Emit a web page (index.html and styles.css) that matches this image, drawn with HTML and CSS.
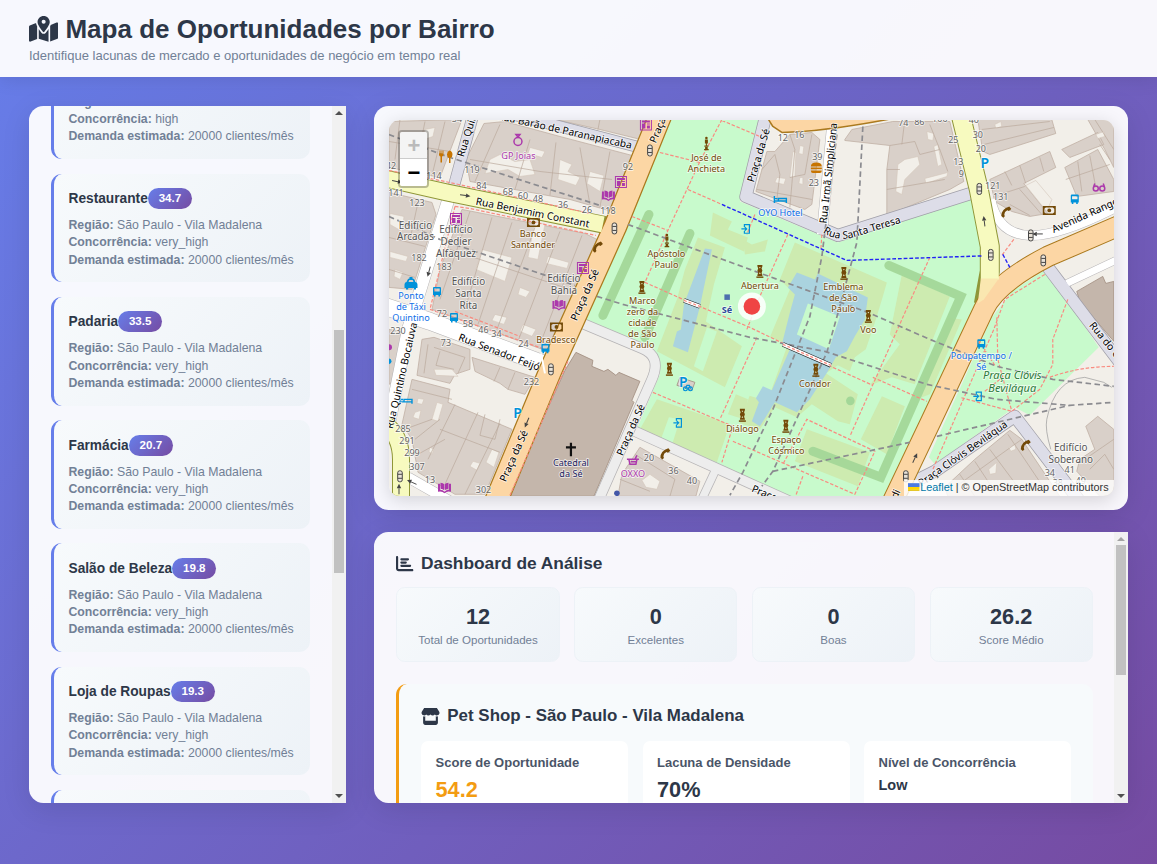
FILE: index.html
```html
<!DOCTYPE html>
<html lang="pt-BR">
<head>
<meta charset="utf-8">
<title>Mapa de Oportunidades por Bairro</title>
<link rel="stylesheet" href="styles.css">
</head>
<body>
<header class="header">
  <h1><svg class="ico ico-map" viewBox="0 0 576 512"><path d="M408 120c0 54.6-73.1 151.9-105.2 192c-7.7 9.6-22 9.6-29.6 0C241.1 271.9 168 174.6 168 120C168 53.7 221.7 0 288 0s120 53.7 120 120zm8 80.4c3.5-6.9 6.7-13.8 9.6-20.6c.5-1.2 1-2.5 1.5-3.7l116-46.4C558.9 123.4 576 135 576 152V422.8c0 9.8-6 18.6-15.1 22.3L416 503V200.4zM137.6 138.3c2.4 14.1 7.2 28.3 12.8 41.5c2.9 6.8 6.1 13.7 9.6 20.6V451.8L32.9 502.7C17.1 509 0 497.4 0 480.4V209.6c0-9.8 6-18.6 15.1-22.3l122.6-49zM327.8 332c13.9-17.4 35.7-45.7 56.2-77V504.3L192 449.4V255c20.5 31.3 42.3 59.6 56.2 77c20.5 25.6 59.1 25.6 79.6 0zM288 152a40 40 0 1 0 0-80 40 40 0 1 0 0 80z"/></svg><span>Mapa de Oportunidades por Bairro</span></h1>
  <p>Identifique lacunas de mercado e oportunidades de negócio em tempo real</p>
</header>
<main class="main">
  <aside class="panel sidebar">
    <div class="scroll">
      <div class="list">
        <article class="opp"><div class="opp-head opp-blank"></div><p><b>Região:</b> São Paulo - Vila Madalena</p><p><b>Concorrência:</b> high</p><p><b>Demanda estimada:</b> 20000 clientes/mês</p></article>
        <article class="opp"><div class="opp-head"><h4>Restaurante</h4><span class="badge">34.7</span></div><p><b>Região:</b> São Paulo - Vila Madalena</p><p><b>Concorrência:</b> very_high</p><p><b>Demanda estimada:</b> 20000 clientes/mês</p></article>
        <article class="opp"><div class="opp-head"><h4>Padaria</h4><span class="badge">33.5</span></div><p><b>Região:</b> São Paulo - Vila Madalena</p><p><b>Concorrência:</b> very_high</p><p><b>Demanda estimada:</b> 20000 clientes/mês</p></article>
        <article class="opp"><div class="opp-head"><h4>Farmácia</h4><span class="badge">20.7</span></div><p><b>Região:</b> São Paulo - Vila Madalena</p><p><b>Concorrência:</b> very_high</p><p><b>Demanda estimada:</b> 20000 clientes/mês</p></article>
        <article class="opp"><div class="opp-head"><h4>Salão de Beleza</h4><span class="badge">19.8</span></div><p><b>Região:</b> São Paulo - Vila Madalena</p><p><b>Concorrência:</b> very_high</p><p><b>Demanda estimada:</b> 20000 clientes/mês</p></article>
        <article class="opp"><div class="opp-head"><h4>Loja de Roupas</h4><span class="badge">19.3</span></div><p><b>Região:</b> São Paulo - Vila Madalena</p><p><b>Concorrência:</b> very_high</p><p><b>Demanda estimada:</b> 20000 clientes/mês</p></article>
        <article class="opp"></article>
      </div>
    </div>
    <div class="bar"><i class="up"></i><div class="rail"><div class="thumb thumb-side"></div></div><i class="down"></i></div>
  </aside>

  <div class="right">
    <section class="panel mapcard">
      <div class="map">
<svg class="tiles" viewBox="389 120.5 725 375.5" preserveAspectRatio="none">
<defs>
  <g id="light" fill="#e8e2d8" stroke="#444" stroke-width="1"><rect x="-2.3" y="-5.5" width="4.6" height="11" rx="2"/><path d="M-2 -2h4M-2 2h4" /></g>
  <g id="art" fill="#734a08"><path d="M-2.5 -6.500h5v1.300l-.8 2.200.8 2-.8 2.500.8 2.200v.8h-5v-.8l.8-2.200-.8-2.500.8-2-.8-2.200z"/><path d="M-3.500 5h7v1.500h-7z"/><path d="M-.8 -4.500h1.600l-.8 1.500zM-.8 2.500l.8 -1.800l.8 1.800z" fill="#e4efc8"/></g>
  <g id="statue" fill="#734a08"><circle cy="-5.500" r="1.300"/><path d="M-1.500 -4h3v4h-1v2h-1v-2h-1zM-2 2h4v1.300h-4zM-1.300 3.500h2.600v2h1v1.200h-4.600v-1.200h1z"/></g>
  <g id="news" fill="#ac39ac"><path fill-rule="evenodd" d="M-6 -6h12v12h-12zM-5 -5v10h10v-10z"/><path d="M-4 -4h8v2h-8zM-4 -1h3.500v5h-3.500zM1 -1h3v1h-3zM1 1h3v3h-3z"/></g>
  <g id="book" fill="#ac39ac"><path d="M-6.500 -4l2 0v6q3 0 4.500 2q1.500 -2 4.500 -2v-6h2v8q-4 -1 -6.500 1.500q-2.500 -2.500 -6.500 -1.500zM-4 -5q3 0 3.700 1.500v6q-1.500 -1.500 -3.700 -1.500zM4 -5q-3 0 -3.700 1.500v6q1.500 -1.500 3.700 -1.500z"/></g>
  <g id="bank" fill="#734a08"><path fill-rule="evenodd" d="M-6.500 -4.500h13v9h-13zM-5 -1.800v3.600l1.500 1.200h7l1.500 -1.200v-3.600l-1.500 -1.200h-7z"/><circle r="1.900"/></g>
  <g id="bus" fill="#0092da"><path fill-rule="evenodd" d="M-3 -4.500h6q1 0 1 1v7h-1v1.500h-1.600v-1.500h-2.800v1.500h-1.600v-1.500h-1v-7q0 -1 1 -1zM-2.700 -2.800v3h5.400v-3z"/></g>
  <g id="gate" fill="none" stroke="#0092da" stroke-width="1.200"><path d="M-1.500 -2v-2.300h5v8.600h-5v-2.300M-4.500 0h5M-1.200 -2l2 2l-2 2"/></g>
  <g id="phone"><path d="M-5 4.500q0 -7 8 -9.500l2 2.500l-2.500 2l-1.500 -.8q-3 1.500 -3 4.300l.5 1.700l-1.500 1.600z" fill="#734a08"/></g>
  <g id="bed" fill="none" stroke="#0092da" stroke-width="1.400"><path d="M-6 -3.500v7M-6 1.500h12M6 3.500v-4.500h-8v2M-5.500 -.8h2.500"/></g>
  <g id="arrow" stroke="#444" fill="#444"><path d="M-5 0h6" /><path d="M1 -2.200l4.500 2.200l-4.500 2.200z" stroke="none"/></g>
  <path id="teresa" d="M823 233Q838 243 856 237L906 222"/>
</defs>
<rect x="389" y="120" width="726" height="377" fill="#f2efe9"/>

<!-- parks -->
<g fill="#c8facc">
  <path d="M671 120H762L740 202L838 243L972 197L982 257L978 300L888 497H780L636 432L660 375L655 355L585 320Z"/>
  <path d="M1046 270L1099 348L1030 416L1015 408L935 465L929 458L992 318L1012 292Z"/>
</g>
<g fill="#cdebb0">
  <path d="M713 213L732 222L728 230L748 238L744 252L710 236Z"/>
  <path d="M698 238L725 248L714 285L706 322L742 347L725 388L657 352L677 300L685 270Z"/>
  <path d="M657 400L730 425L717 463L640 430Z"/>
  <path d="M795 243L887 283L883 297L876 320L866 350L855 358L850 372L838 366L826 374L858 395L850 425L838 422L812 405L797 418L775 408L760 430L740 424L752 390L770 395L788 345L770 338L790 290L780 280Z"/>
  <path d="M882 397L905 407L887 455L861 440Z"/>
  <path d="M807 430L870 453L858 487L795 462Z"/>
  <path d="M902 275L950 297L915 385L892 378L870 386L900 345L890 335Z"/>
  <path d="M736 395L748 400L744 420L728 415Z"/>
  <path d="M917 400L925 370L948 318L962 320L930 395Z"/>
  <path d="M743 240L752 245L768 240L765 252L745 255Z"/>
</g>
<g fill="#c8facc">
  <path d="M707 328L717 332L703 372L694 367Z"/><path d="M669 418L680 420L672 446L661 440Z"/><path d="M752 352L778 360L762 400L744 395Z"/>
</g>
<path fill="#aad3df" d="M797 273L815 280L818 274L868 298L865 320L855 337L847 352L836 358L828 372L810 400L797 413L775 403L760 427L752 422L759 403L756 399L763 387L772 391L790 350L782 345L790 313L795 295L788 288Z"/>
<path fill="#c8facc" d="M808 304L840 317L829 350L797 335Z"/>
<path fill="#aad3df" d="M705 249L712 250L700 307L688 353L673 347L677 332L681 330L684 305Z"/>
<g fill="none" stroke="#a3d798" stroke-width="9" stroke-linejoin="miter" opacity=".95">
  <path stroke-linecap="round" d="M649 215L603 316M690 234L645 338M889 266L961 297L881 478L813 452"/>
</g>
<circle cx="850.500" cy="401.500" r="4.300" fill="#a3d798"/>

<!-- buildings -->
<g fill="#d9d0c9" stroke="#c0b0a5" stroke-width=".8">
  <path d="M389 122L462 120L440 178L389 168Z"/>
  <path d="M484 124L505 122L560 137L636 157L612 212L570 200L470 182L466 160Z"/>
  <path d="M530 120H646L641 140L600 130L560 121Z"/>
  <path d="M389 193L432 203L436 215L412 290L389 288Z"/>
  <path d="M462 210L585 234L597 240L548 352L432 310L440 270Z"/>
  <path d="M422 340L434 338L470 350L470 370L455 375L450 384L417 376Z"/>
  <path d="M472 358L535 378L525 395L508 390L500 384L475 372Z"/>
  <path d="M412 380L450 390L448 403L512 430L485 495H455L418 473L412 440L402 425Z"/>
  <path d="M389 330L402 332L396 380L389 385Z"/>
  <path d="M775 152L790 135L812 133L820 140L812 205L805 210L756 192L767 152Z"/>
  <path d="M845 140L852 130L893 122H950L964 182L950 190L887 216L887 170L890 146L845 141Z"/>
  <path d="M978 120H1052L1056 134L990 155L983 152Z"/>
  <path d="M1062 150L1098 133L1104 145L1070 158ZM1088 120H1114V168L1105 150ZM1065 168L1098 150L1114 180V192L1077 197Z"/>
  <path d="M990 180L1050 152L1056 168L1024 184L1048 214L1030 217L1012 212L995 202Z"/>
  <path d="M945 488L975 460L1010 431L1022 440L1060 497H948Z"/>
  <path d="M1086 427L1098 417L1114 430V497H1100L1077 472L1080 460L1095 450Z"/>
  <path d="M622 475L640 448L700 482L696 497H618Z"/>
</g>
<g fill="#f2efe9" stroke="#d3c6bb" stroke-width=".6">
  <path d="M490 160L500 155L515 162L530 160L535 175L520 177L508 170L485 174Z"/>
  <path d="M530 148L545 152L542 158L528 154ZM560 160L572 165L568 172L580 178L576 186L558 180ZM590 172L604 176L600 192L587 184Z"/>
  <path d="M405 150L410 152L408 165L401 163ZM418 152L428 155L426 162L416 158ZM425 130L435 128L433 137L424 140Z"/>
  <path d="M390 214L404 217L402 232L390 225ZM395 270L403 273L400 280L394 277ZM390 252L408 257L406 262L390 258Z"/>
  <path d="M482 250L512 258L505 282L476 270ZM535 222L545 225L538 260L528 258ZM548 257L569 263L567 269L546 264ZM520 288L530 292L526 298L518 295Z"/>
  <path d="M495 315L507 318L504 325L492 321ZM523 325L536 330L532 337L520 332ZM460 325L470 328L467 336L458 333Z"/>
  <path d="M434 370L452 370L458 377L436 376ZM418 399L424 400L422 405L417 404ZM415 413L421 411L419 420L413 418ZM437 403L443 405L438 422L432 420ZM492 450L499 453L494 468L486 463ZM473 462L480 464L477 471L470 467ZM430 448L434 450L432 455L429 452Z"/>
  <path d="M800 146L804 147L803 155L799 154ZM793 152L796 153L795 178L790 178ZM777 178L786 179L784 185L775 183ZM800 178L803 178L803 185L799 184Z"/>
  <path d="M898 165L905 160L918 157L920 165L905 180L902 195L896 192ZM927 132L934 134L933 141L928 140ZM934 147L938 145L942 165L938 167ZM925 179L948 173L947 177L926 184ZM995 125L1001 122L1002 127L996 129Z"/>
  <path d="M1096 135L1104 132L1105 137L1098 139ZM1026 186L1036 181L1052 200L1047 212ZM989 470L997 463L996 474L990 475ZM1009 448L1015 445L1016 450L1011 452ZM642 481L650 475L660 482L657 490L646 488Z"/>
</g>
<g fill="none" stroke="#baa99c" stroke-width=".7">
  <path d="M400 120L395 160M425 122L415 172M445 122L432 176M389 142L450 152M500 125L475 182M530 140L515 190M556 143L550 196M580 148L590 205M610 152L600 208M470 160L540 172L612 180M600 120L598 130"/>
  <path d="M389 238L425 247M389 270L415 278M418 203L410 240M470 212L440 300M492 218L465 310M512 223L478 325M535 228L497 330M560 232L518 342M582 236L540 345M450 250L570 290"/>
  <path d="M428 345L424 374M434 348L465 358M465 358L458 374M440 352L436 366L454 370M500 368L494 382M515 373L508 390M412 390L452 400M455 405L428 460M478 413L445 485M500 424L465 495M440 430L500 453M410 428L432 420M415 440L440 420M418 455L445 440M485 415L480 436L495 440L500 420"/>
  <path d="M762 170L775 155L780 175L777 200M790 135L795 150L790 208M812 135L805 175L790 178M757 190L812 200M890 146L915 142L920 155L940 150L948 172M905 120L902 145M930 125L940 150M887 170L900 170M887 190L945 180M982 130L1050 122M984 145L1054 128M1020 166L1026 184M1040 158L1044 172M1005 172L1012 186M1000 195L1025 187M1020 190L1042 215M1010 205L1030 216"/>
  <path d="M1078 162L1082 192M1090 156L1096 188M1066 180L1110 165M1095 120L1114 150M1100 145L1110 160"/>
  <path d="M975 462L998 497M990 450L1025 497M1008 435L1045 490M960 475L975 497M955 488L1022 440M1085 460L1114 440M1090 470L1105 455L1114 470M635 455L675 480L670 497M620 480L650 492"/>
  <path d="M1051 450Q1045 430 1047 420Q1055 380 1085 378L1104 383L1112 388" stroke="#999"/>
</g>
<g fill="#c4b6ab" stroke="#a08c7e" stroke-width=".8">
  <path d="M576 353L593 361L592 367L604 372L608 370L616 376L619 373L640 382L632 401L634 403L594 497H508L565 371Z"/>
  <path d="M1077 292L1103 277L1106 284L1114 282V342L1080 302Z"/>
  <path d="M680 378L695 383L692 391L677 386Z" fill="#d9d0c9"/>
</g>

<!-- street casings -->
<g fill="none" stroke="#b5b3b5" stroke-linejoin="round">
  <path stroke-width="11" d="M580 323L642 349Q662 357 652 380L599 500M635 432L752 485L790 502"/><path stroke-width="9" d="M716 470L702 500"/>
  <path stroke-width="13" d="M449 198L422 285L408 330L388 430"/><path stroke-width="18" d="M385 307L430 322L545 365"/>
  <path stroke-width="11" d="M408 478L450 502M833 118L822 235"/><path stroke-width="10" d="M991 200Q998 235 1030 236Q1060 237 1120 206"/><path stroke-width="8" d="M1067 284L1120 259"/>
</g>
<g fill="none" stroke="#a09fa8" stroke-linejoin="round">
  <path stroke-width="13" d="M766 116L746 197L838 236L974 193"/><path stroke-width="12" d="M473 116L453 190M490 109L560 127L640 148"/>
  <path stroke-width="13" d="M1046 265L1120 363M903 488L935 472L1015 417L1080 502"/>
</g>
<g fill="none" stroke="#ededed" stroke-linejoin="round">
  <path stroke-width="9.500" d="M580 323L642 349Q662 357 652 380L599 500M635 432L752 485L790 502"/><path stroke-width="7.500" d="M716 470L702 500"/>
</g>
<g fill="none" stroke="#fff" stroke-linejoin="round">
  <path stroke-width="12" d="M449 198L422 285L408 330L388 430"/><path stroke-width="17" d="M385 307L430 322L545 365"/>
  <path stroke-width="10" d="M408 478L450 502M833 118L822 235"/><path stroke-width="9" d="M991 200Q998 235 1030 236Q1060 237 1120 206"/><path stroke-width="7" d="M1067 284L1120 259"/>
</g>
<g fill="none" stroke="#dddde8" stroke-linejoin="round">
  <path stroke-width="11.500" d="M766 116L746 197L838 236L974 193"/><path stroke-width="10.500" d="M473 116L453 190M490 109L560 127L640 148"/>
  <path stroke-width="11.500" d="M1046 265L1120 363M903 488L935 472L1015 417L1080 502"/>
</g>
<g fill="none" stroke="#8f9638" stroke-linejoin="round"><path stroke-width="18" d="M385 179L447 193L612 227M384 424Q401 436 401 460V500"/><path stroke-width="20" d="M961 116L979 190L990 247V272L984 305"/></g>
<g fill="none" stroke="#ab7a1e" stroke-linejoin="round"><path stroke-width="24" d="M662 112L615 228L551 370L496 502"/><path stroke-width="21.500" d="M892 504L932 420L984 310Q996 284 1048 257L1120 226"/><path fill="#fcd6a4" stroke-width="1.500" d="M768 119L773 127L782 133Q825 132 893 119Z"/></g>
<g fill="none" stroke="#fcd6a4" stroke-linejoin="round"><path stroke-width="21.500" d="M662 112L615 228L551 370L496 502"/><path stroke-width="19.500" d="M892 504L932 420L984 310Q996 284 1048 257L1120 226"/></g>
<g fill="none" stroke="#f7fabf" stroke-linejoin="round"><path stroke-width="16" d="M385 179L447 193L603 225M384 424Q401 436 401 460V500"/><path stroke-width="18" d="M961 116L979 190L990 247V280"/></g>
<path d="M981 279H999L984 300L978 304Z" fill="#fae7b0"/>
<path d="M541 354L545 374" stroke="#fff" stroke-width="2"/>
<path d="M443 187L455 190L453 202L441 199Z" fill="#f7fabf"/>

<!-- paths -->
<g fill="none" stroke="#f98b80" stroke-width="1.200" stroke-dasharray="3.500 1.800">
  <path d="M722 120L700 162L668 231L645 283L690 303L750 328L833 368L873 386M722 121L760 137M660 153L700 163M688 190L722 205M632 217L668 231"/>
  <path d="M930 258L911 300L850 437M873 378L927 402M788 235L760 297L747 330M757 338L720 420M653 393L733 427L722 463M733 442L855 495L875 452L807 420L783 465M803 477L796 496M755 215L747 235M822 235L821 250"/>
  <path d="M389 171L445 182L590 214M455 207L470 209L596 236M455 207L447 240L430 310L465 322L545 350M568 362L510 496M1014 240L1002 256M1045 275L1005 300L994 330L933 470M997 318L998 360L1012 412M995 366L978 340M1068 300L1053 340V365L1040 390L1012 412L960 398M1050 378Q1080 367 1114 367M455 312L520 337M985 392L1000 380"/>
</g>
<g fill="none" stroke="#8b8b90" stroke-width="1.700" stroke-dasharray="5.500 3.500">
  <path d="M628 225L750 270L868 313L930 340L997 367L1053 380L1114 387M597 297L623 305L750 338L825 352L927 385L997 400L1070 406L1114 403M773 472L910 443M937 437L1070 406"/>
  <path d="M837 135L822 257L810 317L773 410L743 473L730 496M863 127L857 243L840 307L827 353L773 472L762 487M389 135L447 157L600 206M389 217L440 240L575 286"/>
</g>
<path fill="none" stroke="#2222f5" stroke-width="1.400" stroke-dasharray="3.800 1.900" d="M722 205L740 213L847 261L982 256.500M1003 255L1010 268"/>
<path d="M684 301L700 307M783 345L831 366" stroke="#222" stroke-width="4.500" fill="none"/><path d="M684 301L700 307M783 345L831 366" stroke="#fff" stroke-width="3.300" fill="none"/><path d="M684 301L700 307M783 345L831 366" stroke="#f98b80" stroke-width="1.200" stroke-dasharray="3 2"/>

<!-- points of interest -->
<use href="#light" x="650" y="151"/><use href="#light" x="614.500" y="229"/><use href="#light" x="551" y="370"/><use href="#light" x="400" y="477"/><use href="#light" x="979.500" y="189.500"/><use href="#light" x="991" y="255.500"/><use href="#light" x="1031" y="236"/><use href="#light" x="1043.500" y="261"/><use href="#light" x="906" y="477"/>
<use href="#art" x="642" y="288"/><use href="#art" x="760" y="272"/><use href="#art" x="844" y="274"/><use href="#art" x="868.500" y="317"/><use href="#art" x="816" y="371"/><use href="#art" x="742.500" y="416"/><use href="#art" x="786" y="427"/><use href="#art" x="669.500" y="370"/>
<use href="#statue" x="706.500" y="144"/><use href="#statue" x="667" y="241"/>
<use href="#news" x="646" y="125"/><use href="#news" x="621" y="182.500"/><use href="#news" x="456" y="219.500"/><use href="#news" x="583" y="268.500"/>
<use href="#book" x="608.500" y="196"/><use href="#book" x="559" y="305.500"/><use href="#book" x="444.500" y="488.500"/>
<use href="#bank" x="533.500" y="223"/><use href="#bank" x="556.500" y="327.500"/><use href="#bank" x="1049.500" y="211"/>
<use href="#bus" x="437" y="292"/><use href="#bus" x="454" y="318"/><use href="#bus" x="545.500" y="349"/><use href="#bus" x="1075" y="199.500"/><use href="#bus" x="981.500" y="344.500"/>
<use href="#gate" x="746" y="229.500"/><use href="#gate" x="678" y="423.500"/><use href="#gate" x="978" y="397"/>
<use href="#phone" x="598" y="247"/><use href="#phone" x="1006.500" y="212"/><use href="#phone" x="665.500" y="454"/><use href="#phone" x="1026" y="445.500"/>
<use href="#bed" x="780.500" y="200"/><use href="#bed" x="406" y="401"/>
<use href="#arrow" transform="translate(465 196) rotate(8)"/><use href="#arrow" transform="translate(397 182) rotate(12)"/><use href="#arrow" transform="translate(429 272) rotate(105)"/><use href="#arrow" transform="translate(527 423) rotate(113)"/><use href="#arrow" transform="translate(984.500 222) rotate(-97)"/><use href="#arrow" transform="translate(1038 234.500) rotate(180)"/><use href="#arrow" transform="translate(915 459) rotate(-65)"/><use href="#arrow" transform="translate(412 483) rotate(205)"/><use href="#arrow" transform="translate(399 490) rotate(-90)"/>
<path fill-rule="evenodd" d="M404.500 285q0 -2 2 -2.300l1.200 -2.700q.5 -1 1.800 -1v-1.500h3v1.500q1.300 0 1.800 1l1.200 2.700q2 .3 2 2.300v3.500h-1.500v1.500h-2.200v-1.500h-5.600v1.500h-2.200v-1.500h-1.500zM408.500 282.500h5l-.8 -1.800h-3.400z" fill="#0092da"/>
<path d="M439 151v4q0 2 1.500 2v6h1.500v-6q1.500 0 1.500 -2v-4h-1v3h-1v-3h-1v3h-1v-3zM449.500 151q3 1 3 4t-2 3.500v5h-1.500v-5q-2 -.5 -2 -3.500t2.500 -4z" fill="#c77400"/>
<path d="M811 167q0 -4 5.500 -4t5.500 4zM811 168h11v1.800h-11zM811 171h11q0 2.500 -2 2.500h-7q-2 0 -2 -2.500z" fill="#c77400"/>
<g fill="none" stroke="#ac39ac" stroke-width="1.500"><circle cx="518" cy="142" r="4"/><path d="M516 135h4l-2 2.500z"/><circle cx="1096" cy="189" r="2.500"/><circle cx="1102.500" cy="189" r="2.500"/><path d="M1094 187l1 -3M1104.500 187l-1 -3"/><path d="M627 460h12M629 460l1 5h6l1 -5M631 462.500h5M635 460l2 -4" /></g>
<path d="M569.900 443.500h2.200v3.500h3.900v2.200h-3.900v7.800h-2.200v-7.800h-3.900v-2.200h3.900z" fill="#111"/>
<rect x="724.500" y="295" width="5.500" height="5.500" fill="#4d6fae"/><circle cx="617" cy="494" r="2.800" fill="#4357a8"/><circle cx="389" cy="348" r="3" fill="#ac39ac"/><circle cx="388.500" cy="362" r="3" fill="#0092da"/>
<g fill="none" stroke="#0092da" stroke-width="1.200"><circle cx="685.500" cy="389.500" r="1.900"/><circle cx="690.500" cy="389.500" r="1.900"/><path d="M685.500 389.500l1.500 -3.500h2.500l1 3.500"/></g>

<!-- labels -->
<g class="num">
  <text x="457" y="123">54</text><text x="472" y="174">119</text><text x="434" y="180">114</text><text x="391" y="170">42</text><text x="481.500" y="190">84</text><text x="508" y="196">68</text><text x="523" y="200">60</text><text x="538" y="203">48</text><text x="563" y="209">36</text><text x="587" y="214">26</text><text x="608" y="215">118</text><text x="628" y="171">92</text><text x="396" y="197">141</text><text x="417" y="207">123</text><text x="419" y="262">182</text><text x="444" y="271">183</text>
  <text x="442" y="318">72</text><text x="468" y="328">58</text><text x="483.500" y="334">46</text><text x="496.500" y="338">34</text><text x="523.500" y="348">24</text><text x="398" y="335">230</text><text x="446" y="347">73</text><text x="531.500" y="386">232</text><text x="403" y="433">285</text><text x="407" y="445">291</text><text x="412" y="457">299</text><text x="417" y="471">307</text><text x="430" y="484">13</text><text x="483.500" y="494">302</text>
  <text x="783" y="142">12</text><text x="799.500" y="139">16</text><text x="817.500" y="161">39</text><text x="814" y="187">23</text><text x="903.500" y="127">74</text><text x="919.500" y="126">86</text><text x="940" y="123">100</text><text x="974" y="124">40</text><text x="978" y="139">30</text><text x="981" y="153">20</text><text x="953.500" y="144">25</text><text x="958.500" y="166">13</text><text x="961.500" y="178">9</text><text x="993" y="190">121</text><text x="1001" y="201">131</text><text x="649" y="462">20</text><text x="673.500" y="475">36</text><text x="692" y="485">40</text><text x="1050" y="477">34</text><text x="1070" y="474">41</text><text x="1058" y="487">38</text><text x="1081" y="485">49</text>
</g>
<g class="bld">
  <text x="415.500" y="230">Edifício</text><text x="415.500" y="241">Arcadas</text><text x="456" y="234">Edifício</text><text x="456" y="246">Dedier</text><text x="456" y="258">Alfaquez</text><text x="468.500" y="286">Edifício</text><text x="468.500" y="298">Santa</text><text x="468.500" y="310">Rita</text><text x="564" y="283">Edifício</text><text x="564" y="295">Bahia</text><text x="1071" y="452">Edifício</text><text x="1071" y="464">Soberano</text>
</g>
<g class="poi brown">
  <text x="533" y="238">Banco</text><text x="533" y="249">Santander</text><text x="556" y="344">Bradesco</text><text x="706.500" y="162">José de</text><text x="706.500" y="173">Anchieta</text><text x="666.500" y="258">Apóstolo</text><text x="666.500" y="269">Paulo</text><text x="760" y="290">Abertura</text><text x="843.500" y="291">Emblema</text><text x="843.500" y="302">de São</text><text x="843.500" y="313">Paulo</text><text x="868.500" y="334">Voo</text><text x="815" y="388">Condor</text><text x="742.500" y="433">Diálogo</text><text x="786.500" y="444">Espaço</text><text x="786.500" y="455">Cósmico</text>
  <text x="642.500" y="305">Marco</text><text x="642.500" y="316">zero da</text><text x="642.500" y="327">cidade</text><text x="642.500" y="338">de São</text><text x="642.500" y="349">Paulo</text>
</g>
<g class="poi purple"><text x="518.500" y="160">GP Joias</text><text x="633" y="478">OXXO</text></g>
<g class="poi blue"><text x="780.500" y="217">OYO Hotel</text><text x="411" y="300">Ponto</text><text x="411" y="311">de Táxi</text><text x="411" y="322">Quintino</text><text x="981.500" y="360">Poupatempo /</text><text x="981.500" y="371">Sé</text></g>
<g class="poi navy"><text x="571" y="467">Catedral</text><text x="571" y="478">da Sé</text><text x="727" y="314" class="strong">Sé</text></g>
<g class="poi leaf"><text x="1012.500" y="380">Praça Clóvis</text><text x="1012.500" y="393">Beviláqua</text></g>
<g class="poi park-p"><text x="985" y="169">P</text><text x="517.500" y="419">P</text><text x="683.500" y="388">P</text></g>
<g class="street">
  <text transform="translate(532 216.500) rotate(11.500)">Rua Benjamim Constant</text>
  <text transform="translate(564 134.500) rotate(12.500)">Rua Barão de Paranapiacaba</text>
  <text transform="translate(470 138) rotate(-73)">Rua Quir</text>
  <text transform="translate(498 356) rotate(21)">Rua Senador Feijó</text>
  <text transform="translate(405 377) rotate(-77)">Rua Quintino Bocaiuva</text>
  <text transform="translate(588 297) rotate(-66)">Praça da Sé</text>
  <text transform="translate(517 458) rotate(-66)">Praça da Sé</text>
  <text transform="translate(634 432) rotate(-66)">Praça da Sé</text>
  <text transform="translate(661 132) rotate(-67)">Praça</text>
  <text transform="translate(762 157) rotate(-73)">Praça da Sé</text>
  <text transform="translate(832 174) rotate(-84)">Rua Irmã Simpliciana</text>
  <text class="from"><textPath href="#teresa">Rua Santa Teresa</textPath></text>
  <text class="from" transform="translate(1054 233.500) rotate(-24)">Avenida Rangel</text>
  <text transform="translate(965 457) rotate(-35)">Praça Clóvis Beviláqua</text>
  <text class="from" transform="translate(1089 326) rotate(51)">Rua do C</text>
  <text transform="translate(770 500) rotate(23)">Praça da</text>
  <text transform="translate(899 496) rotate(-66)">di</text>
</g>
<circle cx="752" cy="307" r="14" fill="#fff" opacity=".85"/><circle cx="752" cy="307" r="8.300" fill="#ef4444"/>
</svg>
        <div class="zoomctl"><span class="off">+</span><span>−</span></div>
        <div class="attrib"><svg viewBox="0 0 12 8"><path fill="#4C7BE1" d="M0 0h12v4H0z"/><path fill="#FFD500" d="M0 4h12v3H0z"/><path fill="#E0BC00" d="M0 7h12v1H0z"/></svg><a>Leaflet</a> | © OpenStreetMap contributors</div>
      </div>
    </section>

    <section class="panel dash">
      <div class="scroll">
        <div class="dash-body">
          <h3><svg class="ico" viewBox="0 0 512 512"><path d="M32 32c17.700 0 32 14.300 32 32V400c0 8.800 7.200 16 16 16H480c17.700 0 32 14.300 32 32s-14.300 32-32 32H80c-44.200 0-80-35.800-80-80V64C0 46.300 14.300 32 32 32zm96 96c0-17.700 14.300-32 32-32l192 0c17.700 0 32 14.300 32 32s-14.300 32-32 32l-192 0c-17.700 0-32-14.300-32-32zm32 64H288c17.700 0 32 14.300 32 32s-14.300 32-32 32H160c-17.700 0-32-14.300-32-32s14.300-32 32-32zm0 96H416c17.700 0 32 14.300 32 32s-14.300 32-32 32H160c-17.700 0-32-14.300-32-32s14.300-32 32-32z"/></svg><span>Dashboard de Análise</span></h3>
          <div class="stats">
            <div class="stat"><strong>12</strong><span>Total de Oportunidades</span></div>
            <div class="stat"><strong>0</strong><span>Excelentes</span></div>
            <div class="stat"><strong>0</strong><span>Boas</span></div>
            <div class="stat"><strong>26.2</strong><span>Score Médio</span></div>
          </div>
          <div class="detail">
            <h3><svg class="ico ico-store" viewBox="0 0 576 512"><path d="M547.6 103.8L490.3 13.1C485.2 5 476.1 0 466.4 0H109.6C99.9 0 90.8 5 85.7 13.1L28.3 103.8c-29.6 46.8-3.4 111.9 51.9 119.4c4 .5 8.1 .8 12.1 .8c26.1 0 49.3-11.4 65.2-29c15.9 17.6 39.1 29 65.2 29c26.1 0 49.3-11.4 65.2-29c15.9 17.6 39.1 29 65.2 29c26.2 0 49.3-11.4 65.2-29c16 17.6 39.1 29 65.2 29c4.1 0 8.1-.3 12.1-.8c55.5-7.4 81.8-72.5 52.1-119.4zM499.7 254.9l-.1 0c-5.3 .7-10.7 1.1-16.2 1.1c-12.4 0-24.3-1.9-35.4-5.3V384H128V250.6c-11.2 3.5-23.2 5.4-35.6 5.4c-5.5 0-11-.4-16.3-1.1l-.1 0c-4.1-.6-8.1-1.3-12-2.3V384v64c0 35.3 28.7 64 64 64H448c35.3 0 64-28.7 64-64V384 252.6c-4 1-8 1.8-12.3 2.3z"/></svg><span>Pet Shop - São Paulo - Vila Madalena</span></h3>
            <div class="metrics">
              <div class="metric"><h5>Score de Oportunidade</h5><div class="val warn">54.2</div></div>
              <div class="metric"><h5>Lacuna de Densidade</h5><div class="val">70%</div></div>
              <div class="metric"><h5>Nível de Concorrência</h5><div class="val small">Low</div></div>
            </div>
          </div>
        </div>
      </div>
      <div class="bar"><i class="up dim"></i><div class="rail"><div class="thumb thumb-dash"></div></div><i class="down"></i></div>
    </section>
  </div>
</main>
</body>
</html>
```
FILE: styles.css
```css
html { font-size: 14.4625px; height: 100%; }
* { box-sizing: border-box; margin: 0; padding: 0; }
body {
  height: 864px;
  overflow: hidden;
  font-family: "Liberation Sans", Arial, sans-serif;
  color: #2d3748;
  background: linear-gradient(135deg, #667eea 0%, #764ba2 100%);
}
.header {
  height: 77px;
  padding: 15.2px 2rem 0;
  background: rgba(255, 255, 255, .95);
  box-shadow: 0 2px 18px rgba(0, 0, 0, .1);
}
.header h1 { display: flex; align-items: center; gap: .5rem; font-size: 1.8rem; line-height: 2.0625rem; white-space: nowrap; }
.header p { margin-top: 3px; font-size: .9rem; line-height: 1.0625rem; color: #718096; }
.ico { height: 1em; width: 1em; fill: currentColor; flex: none; }
.ico-map, .ico-store { width: 1.125em; }
.ico-map { margin-top: -3px; }
.main {
  display: grid;
  grid-template-columns: 316.8px 1fr;
  gap: 28.7px;
  padding: 2rem;
  height: 755px;
}
.panel { background: rgba(255, 255, 255, .95); border-radius: 1rem; box-shadow: 0 7px 29px rgba(0, 0, 0, .1); }
.sidebar, .dash { display: flex; overflow: hidden; border-radius: 1rem 0 0 1rem; }
.scroll { flex: 1; min-width: 0; overflow: hidden; }
.list { display: flex; flex-direction: column; gap: 1rem; padding: 0 1.5rem; margin-top: -55.6px; }
.opp {
  flex: none;
  height: 108.8px;
  padding: 1rem 0 1rem 14.9px;
  border-left: .25rem solid #667eea;
  border-radius: .75rem;
  background: linear-gradient(135deg, #f7fafc, #edf2f7);
}
.opp-head { display: flex; align-items: center; margin-bottom: 8px; }
.opp-blank { height: 21px; }
.opp h4 { font-size: .95rem; color: #2d3748; }
.badge {
  padding: 0 .75rem;
  font-size: .8rem;
  font-weight: bold;
  line-height: 21px;
  color: #fff;
  border-radius: 1.25rem;
  background: linear-gradient(135deg, #667eea, #764ba2);
}
.opp p { font-size: .85rem; line-height: 17.3px; color: #718096; white-space: nowrap; }
.bar { display: flex; flex-direction: column; align-items: center; flex: none; width: 13.6px; background: #f1f1f1; }
.bar i { height: 13.6px; width: 8px; display: flex; align-items: center; }
.bar i::before { content: ""; border: 4px solid transparent; }
.bar .up::before { border-top: 0; border-bottom-color: #505050; }
.bar .down::before { border-bottom: 0; border-top-color: #505050; }
.bar .dim::before { border-bottom-color: #a3a3a3; }
.rail { flex: 1; width: 10px; }
.thumb { background: #c1c1c1; }
.thumb-side { height: 243px; margin-top: 210.5px; }
.thumb-dash { height: 130px; }
.right { display: grid; grid-template-rows: 404.2px 1fr; gap: 1.5rem; min-width: 0; min-height: 0; }
.mapcard { padding: 1rem; }
.map { position: relative; height: 100%; overflow: hidden; border-radius: .75rem; box-shadow: 0 4px 18px rgba(0, 0, 0, .15); }
.tiles { display: block; width: 100%; height: 100%; font-family: "Noto Sans", sans-serif; }
.tiles text { text-anchor: middle; paint-order: stroke; stroke: rgba(255, 255, 255, .65); stroke-width: 1.8px; stroke-linejoin: round; }
.tiles .from { text-anchor: start; }
.num { font-size: 9px; fill: #666; }
.bld { font-size: 9.9px; fill: #555; }
.poi { font-size: 9.1px; }
.brown { fill: #734a08; }
.purple { fill: #ac39ac; }
.blue { fill: #0f70e8; }
.navy { fill: #1c2260; }
.strong { font-weight: bold; fill: #2e4a9c; }
.leaf { font-size: 11px; font-style: italic; fill: #2d7a3a; }
.park-p { font-size: 14px; font-weight: 600; fill: #0092da; }
.street { font-size: 10.2px; fill: #000; }
.zoomctl {
  position: absolute;
  left: 9.5px;
  top: 9.5px;
  border: 2px solid rgba(0, 0, 0, .25);
  border-radius: 4px;
  background-clip: padding-box;
  overflow: hidden;
}
.zoomctl span { display: block; width: 27px; height: 27px; background: #fff; color: #000; text-align: center; font: bold 22px/27px "Liberation Sans", sans-serif; }
.zoomctl .off { background: #f4f4f4; color: #bbb; border-bottom: 1px solid #ccc; }
.attrib { position: absolute; right: 0; bottom: 0; padding: 0 5px 0 4px; font-size: .75rem; line-height: 15.5px; color: #333; background: rgba(255, 255, 255, .8); white-space: nowrap; }
.attrib svg { width: 11.5px; height: 8px; margin-right: .5px; }
.attrib a { color: #0078a8; }
.dash-body { padding: 1.5rem 1.5rem 1.5rem 22px; }
.dash h3 { display: flex; align-items: center; gap: .5rem; font-size: 1.2rem; line-height: 20px; }
.stats { display: grid; grid-template-columns: repeat(4, 1fr); gap: 1rem; margin-top: 14px; }
.stat {
  height: 75px;
  padding-top: 15.5px;
  text-align: center;
  border: 1px solid #edf2f7;
  border-radius: .6rem;
  background: linear-gradient(135deg, #f7fafc, #edf2f7);
}
.stat strong { display: block; font-size: 1.5rem; line-height: 25px; }
.stat span { display: block; margin-top: 3px; font-size: .8rem; line-height: 16px; color: #718096; }
.detail { margin-top: 22px; height: 400px; padding: 1.5rem; border-left: .25rem solid #f39c12; border-radius: .75rem; background: #f7fafc; }
.detail h3 { font-size: 1.17rem; }
.metrics { display: grid; grid-template-columns: repeat(3, 1fr); gap: 1rem; margin-top: 14.5px; }
.metric { height: 120px; padding: 14.3px 1rem; border-radius: .5rem; background: #fff; }
.metric h5 { font-size: .9rem; line-height: 16px; color: #4a5568; white-space: nowrap; }
.val { margin-top: 6px; font-size: 1.5rem; font-weight: bold; line-height: 25px; }
.val.small { font-size: 1rem; line-height: 17px; }
.warn { color: #f39c12; }
```
